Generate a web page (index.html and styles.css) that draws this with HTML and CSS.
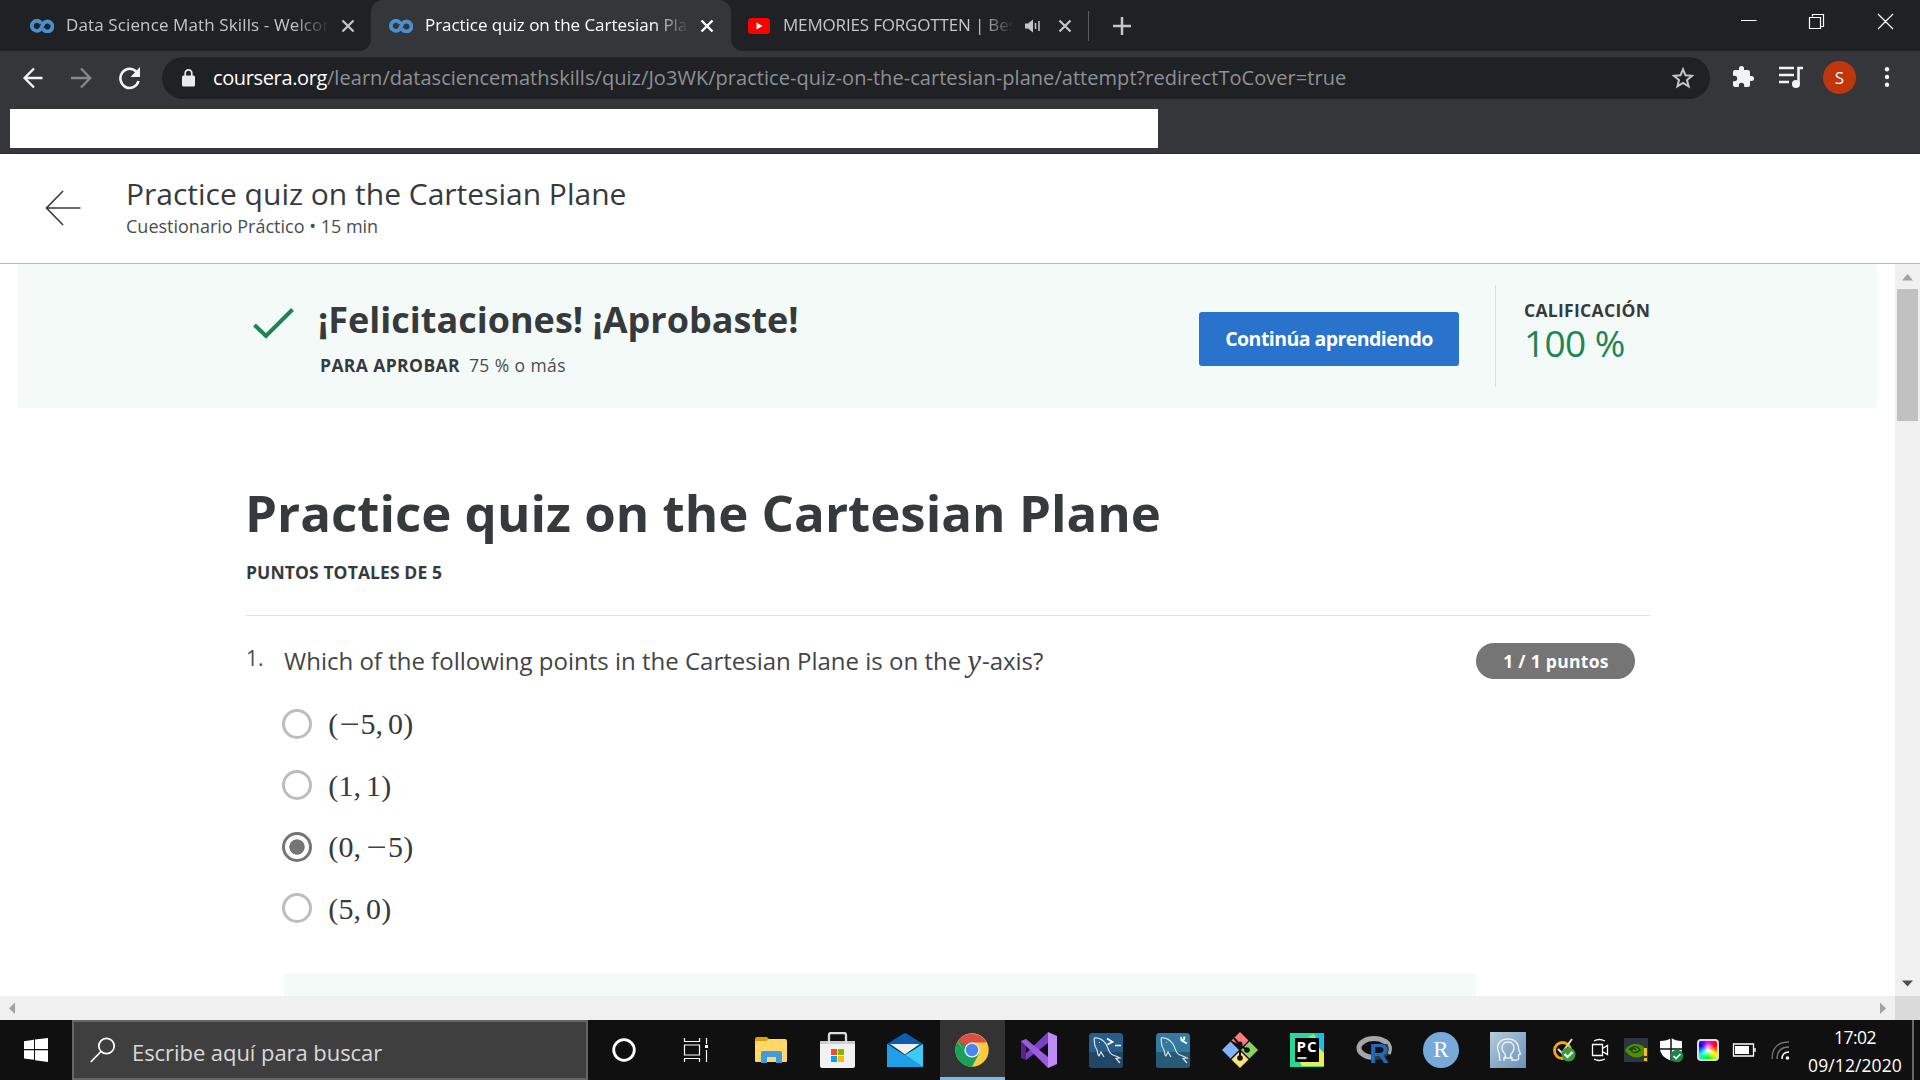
FILE: index.html
```html
<!DOCTYPE html>
<html lang="es">
<head>
<meta charset="utf-8">
<title>Practice quiz on the Cartesian Plane</title>
<link rel="stylesheet" href="styles.css">
</head>
<body>
<div class="screen">
  <div class="tabs">
    <div class="tab tab-one">
      <svg class="fav" viewBox="0 0 24 14"><path d="M11.300 4.600A5 5 0 1 0 10.800 9.800L13.600 4.300A5 5 0 1 1 12.900 9.600" fill="none" stroke="#4a8fd0" stroke-width="3.800"/></svg>
      <span class="tab-text ls-t1">Data Science Math Skills - Welcome</span>
      <svg class="close" viewBox="0 0 14 14"><path d="M1.500 1.500l11 11M12.500 1.500l-11 11" stroke="#c3c6ca" stroke-width="2.200"/></svg>
    </div>
    <div class="tab-well">
      <div class="tab tab-two">
        <svg class="fav" viewBox="0 0 24 14"><path d="M11.300 4.600A5 5 0 1 0 10.800 9.800L13.600 4.300A5 5 0 1 1 12.900 9.600" fill="none" stroke="#4a8fd0" stroke-width="3.800"/></svg>
        <span class="tab-text ls-t2">Practice quiz on the Cartesian Plane</span>
        <svg class="close" viewBox="0 0 14 14"><path d="M1.500 1.500l11 11M12.500 1.500l-11 11" stroke="#fff" stroke-width="2.400"/></svg>
      </div>
    </div>
    <div class="tab tab-three">
      <svg class="yt" viewBox="0 0 22 16"><rect width="22" height="16" rx="3.500" fill="#f00"/><path d="M8.500 4.500v7l6-3.500z" fill="#fff"/></svg>
      <span class="tab-text ls-t3">MEMORIES FORGOTTEN | Best</span>
      <svg class="speaker" viewBox="0 0 16 14"><path d="M0 4.500h3L8 .5v13L3 9.500H0z" fill="#c3c6ca"/><path d="M10.500 4v6M14 2v10" stroke="#c3c6ca" stroke-width="1.500"/></svg>
      <svg class="close" viewBox="0 0 14 14"><path d="M1.500 1.500l11 11M12.500 1.500l-11 11" stroke="#c3c6ca" stroke-width="2.200"/></svg>
    </div>
    <div class="strip">
      <div class="tab-sep"></div>
      <svg class="plus" viewBox="0 0 18 18"><path d="M9 0v18M0 9h18" stroke="#c3c6ca" stroke-width="2.500"/></svg>
      <svg class="winbtns" viewBox="0 0 153 18"><g fill="none" stroke="#fff" stroke-width="1.200"><path d="M0 8.500h15.500M71.500 4.500V2.500h11v12h-2.500M68.500 5.500h11v11h-11zM137 2l15 15M152 2l-15 15"/></g></svg>
    </div>
  </div>
  <div class="toolbar">
    <svg class="nav" viewBox="0 0 120 24"><g fill="none" stroke-width="2.400"><path d="M20.500 12H3M12 2.500L2.600 12l9.400 9.500" stroke="#f1f3f4"/><path d="M49 12h18.500M59 2.500L68.200 12 59 21.500" stroke="#85878a"/><path d="M114.500 6A9.200 9.600 0 1 0 116.500 15" stroke="#f1f3f4" stroke-width="2.600"/></g><path d="M118 1v10h-9.500z" fill="#f1f3f4"/></svg>
    <div class="omnibox">
      <svg class="lock" viewBox="0 0 13 18"><rect y="6.500" width="13" height="11" rx="1.500" fill="#e8eaed"/><path d="M3.200 7V4.200a3.300 3.300 0 0 1 6.600 0V7" fill="none" stroke="#e8eaed" stroke-width="1.700"/></svg>
      <span class="url"><span class="host">coursera.org</span><span class="path">/learn/datasciencemathskills/quiz/Jo3WK/practice-quiz-on-the-cartesian-plane/attempt?redirectToCover=true</span></span>
      <svg class="star" viewBox="0 0 22 22"><path d="M11 2.300l2.500 6 6.500.5-5 4.200 1.600 6.400L11 16l-5.600 3.400L7 13 2 8.800l6.500-.5z" fill="none" stroke="#c3c6ca" stroke-width="2"/></svg>
    </div>
    <svg class="puzzle" viewBox="0 0 24 24"><path d="M20.500 11H19V7c0-1.100-.9-2-2-2h-4V3.500a2.500 2.500 0 0 0-5 0V5H4c-1.100 0-2 .9-2 2v3.800h1.500a2.700 2.700 0 0 1 0 5.400H2V20c0 1.100.9 2 2 2h3.800v-1.500a2.700 2.700 0 0 1 5.400 0V22H17c1.100 0 2-.9 2-2v-4h1.500a2.500 2.500 0 0 0 0-5z" fill="#f1f3f4"/></svg>
    <svg class="queue" viewBox="0 0 24 23"><path d="M0 2h15M0 9h15M0 16h10" stroke="#f1f3f4" stroke-width="2.500"/><path d="M19.500 18V2H24" fill="none" stroke="#f1f3f4" stroke-width="2.600"/><circle cx="17" cy="18" r="4" fill="#f1f3f4"/></svg>
    <span class="avatar">S</span>
    <svg class="dots" viewBox="0 0 6 20"><g fill="#f1f3f4"><circle cx="3" cy="2.300" r="2.200"/><circle cx="3" cy="10" r="2.200"/><circle cx="3" cy="17.700" r="2.200"/></g></svg>
  </div>
  <div class="bookmarks"><div class="blank"></div></div>

  <header class="head">
    <svg class="back" viewBox="0 0 36 36"><path d="M35.500 18H1.500M18 1L1.500 18 18 35" fill="none" stroke="#373a3c" stroke-width="1.600"/></svg>
    <div>
      <div class="head-title">Practice quiz on the Cartesian Plane</div>
      <div class="head-sub">Cuestionario Práctico • 15 min</div>
    </div>
  </header>

  <div class="view">
    <main class="page">
      <section class="banner">
        <svg class="check" viewBox="0 0 41 31"><path d="M1.500 17L13 28 39.500 1.500" fill="none" stroke="#1d8553" stroke-width="4"/></svg>
        <div class="congrats">
          <div class="big">¡Felicitaciones! ¡Aprobaste!</div>
          <div class="pass"><b>PARA APROBAR</b><span class="pct">75 % o más</span></div>
        </div>
        <div class="button">Continúa aprendiendo</div>
        <div class="grade">
          <div class="grade-label">CALIFICACIÓN</div>
          <div class="grade-value">100 %</div>
        </div>
      </section>
      <section class="quiz">
        <h1>Practice quiz on the Cartesian Plane</h1>
        <div class="total">PUNTOS TOTALES DE 5</div>
        <div class="question">
          <span class="num">1.</span>
          <div class="prompt"><span>Which of the following points in the Cartesian Plane is on the</span><i class="var">y</i><span>-axis?</span></div>
          <span class="pill">1 / 1 puntos</span>
        </div>
        <div class="options">
          <div class="option"><span class="radio"></span><span class="math"><span class="par">(</span><span class="minus">−</span>5<span class="comma">,</span>0<span class="par">)</span></span></div>
          <div class="option"><span class="radio"></span><span class="math"><span class="par">(</span>1<span class="comma">,</span>1<span class="par">)</span></span></div>
          <div class="option"><span class="radio on"></span><span class="math"><span class="par">(</span>0<span class="comma">,</span><span class="minus">−</span>5<span class="par">)</span></span></div>
          <div class="option"><span class="radio"></span><span class="math"><span class="par">(</span>5<span class="comma">,</span>0<span class="par">)</span></span></div>
        </div>
        <div class="feedback"></div>
      </section>
    </main>
    <div class="vbar">
      <svg class="arrow" viewBox="0 0 25 25"><path d="M7 16.500L12.500 10l5.500 6.500z" fill="#a3a3a3"/></svg>
      <div class="thumb"></div>
      <svg class="arrow" viewBox="0 0 25 25"><path d="M7 9.500L12.500 15.500 18 9.500z" fill="#505050"/></svg>
    </div>
  </div>
  <div class="hbar">
    <svg class="harrow" viewBox="0 0 24 24"><path d="M15 6.500L9 12.500l6 5.500z" fill="#a3a3a3"/></svg>
    <svg class="harrow" viewBox="0 0 24 24"><path d="M9 6.500l6 6-6 5.500z" fill="#a3a3a3"/></svg>
    <div class="corner"></div>
  </div>

  <footer class="taskbar">
    <div class="start"><svg width="24" height="24" viewBox="0 0 24 24"><path d="M0 3.200L10 1.700V11H0zM11 1.500L24 0v11H11zM0 12.300h10v9.500L0 20.500zM11 12.300h13V24l-13-1.700z" fill="#fff"/></svg></div>
    <div class="search">
      <svg width="26" height="26" viewBox="0 0 26 26"><circle cx="16.500" cy="9" r="7.700" fill="none" stroke="#fff" stroke-width="1.700"/><path d="M11 14.500L.8 25" stroke="#fff" stroke-width="1.700"/></svg>
      <span class="hint">Escribe aquí para buscar</span>
    </div>
    <div class="slot wide"><svg width="26" height="26" viewBox="0 0 26 26"><circle cx="13" cy="13" r="10.300" fill="none" stroke="#fff" stroke-width="2.800"/></svg></div>
    <div class="slot wide"><svg width="26" height="24" viewBox="0 0 26 24"><path d="M1.500 0v3.500h15V0M1.500 24v-3.500h15V24M1.500 7h15v10h-15zM23.500 0v6M23.500 12v12" fill="none" stroke="#fff" stroke-width="1.200"/><path d="M22 7h3v3h-3z" fill="#fff"/></svg></div>
    <div class="apps">
      <div class="slot"><svg width="34" height="28" viewBox="0 0 34 28"><path d="M1 3a2 2 0 0 1 2-2h10l3 3h-3v5H1z" fill="#e19d0b"/><path d="M1 5h11l3-2h16a2 2 0 0 1 2 2v20a1 1 0 0 1-1 1H2a1 1 0 0 1-1-1z" fill="#ffd766"/><path d="M7 27V17a2 2 0 0 1 2-2h17a2 2 0 0 1 2 2v10h-6v-6h-9v6z" fill="#3f9ae0"/></svg></div>
      <div class="slot"><svg width="36" height="36" viewBox="0 0 36 36"><path d="M0 9h35v25a2 2 0 0 1-2 2H2a2 2 0 0 1-2-2z" fill="#f1f1f1"/><path d="M0 9h35v3H0z" fill="#ccc"/><path d="M9 12V3a2 2 0 0 1 2-2h13a2 2 0 0 1 2 2v9" fill="none" stroke="#ddd" stroke-width="2.300"/><path d="M11 17h6v6h-6z" fill="#f25022"/><path d="M18 17h6v6h-6z" fill="#7fba00"/><path d="M11 24h6v6h-6z" fill="#00a4ef"/><path d="M18 24h6v6h-6z" fill="#ffb900"/></svg></div>
      <div class="slot"><svg width="36" height="34" viewBox="0 0 36 34"><path d="M0 11L15.500 1.300a4 4 0 0 1 5 0L36 11 18 20z" fill="#0a5eb0"/><path d="M0 11l18 12L36 11v23H0z" fill="#1d9be8"/><path d="M3.500 11h29L18 21.500z" fill="#f0f0f2"/><path d="M18 22L36 11v23z" fill="#3dcbf5"/><path d="M0 34l2-1 16-11 18 12z" fill="#158ada"/><path d="M0 11l18 11 18 12H0z" fill="#1f9fe8"/></svg></div>
      <div class="slot active"><svg width="34" height="34" viewBox="0 0 34 34"><circle cx="17" cy="17" r="16.700" fill="#fccb42"/><path d="M2.500 8.700A16.700 16.700 0 0 0 17 33.700L24 20.500 17 17 10 19z" fill="#18a05b"/><path d="M2.500 8.700A16.700 16.700 0 0 1 31.500 9.500H17L10 15z" fill="#db4f43"/><path d="M3 8.200L9.500 19 12 13z" fill="#18a05b"/><circle cx="17" cy="17" r="7.600" fill="#f1f1f1"/><circle cx="17" cy="17" r="6.200" fill="#4a86ee"/></svg></div>
      <div class="slot"><svg width="36" height="36" viewBox="0 0 36 36"><path d="M5 22L0 26 27 0v11L5 28z" fill="#7d3fc8"/><path d="M0 9l5-2v21l-5-2z" fill="#54238e"/><path d="M0 9l5-2 22 18v11z" fill="#9b5be0"/><path d="M27 0l9 4v28l-9 4z" fill="#bd8cf4"/></svg></div>
      <div class="slot"><svg width="34" height="35" viewBox="0 0 34 35"><rect width="34" height="35" rx="3.500" fill="#285d8b"/><path d="M0 19h34v12a4 4 0 0 1-4 4H4a4 4 0 0 1-4-4z" fill="#204765"/><path d="M5 5c5-1 9 2 12 6 3 5 2 9 7 11 3 1 5 2 7 3l-4 .5 4 4.500M5 5c1 4-1 7 3 12 1 2 0 5 2 6l2-4 3 5M10 9.500h.8" fill="none" stroke="#dbe6ef" stroke-width="1.200"/><path d="M18 5.500l5.500 3.500-5 2.500M26 12.500h6" fill="none" stroke="#fff" stroke-width="1.700"/></svg></div>
      <div class="slot"><svg width="34" height="35" viewBox="0 0 34 35"><rect width="34" height="35" rx="3.500" fill="#34799f"/><path d="M0 19h34v12a4 4 0 0 1-4 4H4a4 4 0 0 1-4-4z" fill="#265a77"/><path d="M5 5c5-1 9 2 12 6 3 5 2 9 7 11 3 1 5 2 7 3l-4 .5 4 4.500M5 5c1 4-1 7 3 12 1 2 0 5 2 6l2-4 3 5M10 9.500h.8" fill="none" stroke="#d5e6ef" stroke-width="1.200"/><path d="M25 4l.5 3.500 5.500 3M28.500 3.500l-.5 3-3 1" fill="none" stroke="#fff" stroke-width="1.800"/></svg></div>
      <div class="slot"><svg width="36" height="36" viewBox="0 0 36 36"><path d="M18 0l8.500 8.500-6 6L9.500 8.500z" fill="#ff7b80"/><path d="M8.500 9.500L17 18l-8.500 8.500L0 18z" fill="#82b1ff"/><path d="M27.500 9.500L36 18l-8.500 8.500L19 18z" fill="#8bd35f"/><path d="M18 19l8.500 8.500L18 36l-8.500-8.500z" fill="#ffe27d"/><path d="M12 6l6 7v14M18 13l7 5" stroke="#111" stroke-width="2" fill="none"/><circle cx="18" cy="12" r="2.500" fill="#111"/><circle cx="25" cy="18" r="2.800" fill="#111"/><circle cx="18" cy="26" r="2.800" fill="#111"/></svg></div>
      <div class="slot"><svg width="34" height="34" viewBox="0 0 34 34"><path d="M0 0h34v34H0z" fill="#27d79b"/><path d="M24 0h10v20l-8-10z" fill="#17c0e6"/><path d="M26 12l8 8v13H12l-2-4z" fill="#e9f04c"/><path d="M18 4l6-3 3 6z" fill="#a4e84a"/><path d="M5 5h24v24H5z" fill="#000"/><path d="M7.500 24h9v2.200h-9z" fill="#ccc"/><text x="6.500" y="18.500" class="pc" textLength="20">PC</text></svg></div>
      <div class="slot"><svg class="spill" width="36" height="28" viewBox="0 0 36 28"><ellipse cx="18" cy="12" rx="15" ry="9.500" fill="none" stroke="#a5a6aa" stroke-width="5"/><path d="M15 8h19v20H15z" fill="#111" opacity=".75"/><path d="M29 4c5 3 7 9 4 14" fill="none" stroke="#a5a6aa" stroke-width="3"/><text x="13.500" y="27" class="rproj" textLength="21">R</text></svg></div>
      <div class="slot"><svg width="36" height="36" viewBox="0 0 36 36"><circle cx="18" cy="18" r="18" fill="#75aadb"/><text x="18" y="25" class="rstudio">R</text></svg></div>
      <div class="slot"><svg width="36" height="36" viewBox="0 0 36 36"><defs><linearGradient id="h" x1="0" y1="0" x2="1" y2="1"><stop offset="0" stop-color="#b4ccdc"/><stop offset="1" stop-color="#6a8fb8"/></linearGradient></defs><path d="M0 0h36v36H0z" fill="url(#h)"/><path d="M10 29l-1-8C5 13 10 7 18 7c7 0 11 5 10.500 10l2 5-2 1v4c-1 2-4 1-6 1M14 29v-3c2-1 2-2 1-4-6-6-2-12 3-12s9 6 3 12c-1 2-1 3 1 4v3M15 26h7" fill="none" stroke="#e7eff6" stroke-width="1.500"/></svg></div>
    </div>
    <div class="tray">
      <svg viewBox="0 0 24 24"><circle cx="10.500" cy="12.500" r="8" fill="none" stroke="#f9a51c" stroke-width="2.800"/><path d="M6 11l4 4L20 1" fill="none" stroke="#ddd" stroke-width="2"/><circle cx="16.500" cy="16.500" r="7" fill="#3a9a3e"/><path d="M12.500 16l3 3 5-5" fill="none" stroke="#fff" stroke-width="2.200"/></svg>
      <svg viewBox="0 0 24 24"><path d="M4.500 6.500h10v11h-10zM14.500 10.500l5-3v9l-5-3M6 3q5-3 11 0M6 21q5 3 11 0" fill="none" stroke="#fff" stroke-width="1.300"/></svg>
      <svg viewBox="0 0 24 24"><path d="M0 0h24v24H0z" fill="#2e3642"/><path d="M1 12c5-8 14-7 19-3v8c-7 5-15 2-19-5z" fill="#4d8d08"/><path d="M5 12c4-5 9-4 11 0-4 4-8 3-9 0 2-2 4-2 5 0" fill="none" stroke="#24420c" stroke-width="1.400"/><path d="M20 10h3v8h-3zM20 20h3v3h-3z" fill="#f0c419"/></svg>
      <svg viewBox="0 0 24 24"><path d="M0 3q7 0 11.500-3Q15 3 22 3v8q0 8-11 12Q0 18 0 11z" fill="#fff"/><path d="M11 0v23M0 11h22" stroke="#111" stroke-width="1.500"/><circle cx="17" cy="18" r="6.300" fill="#138a4b"/><path d="M13.500 18l2.500 2.500 4.500-4.500" fill="none" stroke="#fff" stroke-width="1.700"/></svg>
      <div class="hue"></div>
      <svg viewBox="0 0 24 24"><path d="M1.500 6h20v12h-20zM23 10v4" fill="none" stroke="#fff" stroke-width="1.300"/><path d="M3 8h14v8H3z" fill="#fff"/></svg>
      <svg viewBox="0 0 24 24"><path d="M4 21Q4 4 21 4" fill="none" stroke="#777" stroke-width="1.300"/><path d="M9 21Q9 9 21 9" fill="none" stroke="#777" stroke-width="1.300"/><path d="M14 21q0-7 7-7" fill="none" stroke="#fff" stroke-width="1.500"/><circle cx="19.500" cy="20" r="1.800" fill="#fff"/></svg>
    </div>
    <div class="clock"><div class="time">17:02</div><div class="date">09/12/2020</div></div>
    <div class="peek"></div>
  </footer>
</div>
</body>
</html>
```
FILE: styles.css
```css
* { box-sizing: border-box; }
body { margin: 0; font-family: "Open Sans", "Noto Sans", sans-serif; color: #373a3c; background: #fff; overflow: hidden; }
svg { display: block; flex: none; }
.screen { width: 1920px; height: 1080px; display: flex; flex-direction: column; overflow: hidden; }

/* browser chrome */
.tabs { height: 51px; flex: none; background: #35363a; display: flex; align-items: center; color: #c3c6ca; font-size: 17px; }
.tab { height: 51px; display: flex; align-items: center; background: #202124; flex: none; }
.tab-one { width: 371px; padding-left: 30px; border-radius: 0 0 12px 0; }
.tab-well { background: #202124; flex: none; }
.tab-two { width: 360px; padding-left: 18px; background: #35363a; color: #fff; border-radius: 12px 12px 0 0; }
.tab-three { width: 357px; padding-left: 17px; border-radius: 0 0 0 12px; }
.fav { width: 24px; height: 14px; margin-right: 12px; }
.tab-text { width: 264px; overflow: hidden; white-space: nowrap; -webkit-mask-image: linear-gradient(90deg, #000 86%, transparent 100%); mask-image: linear-gradient(90deg, #000 86%, transparent 100%); margin-bottom: 2px; }
.ls-t1 { letter-spacing: 0.12px; }
.ls-t2 { letter-spacing: -0.04px; }
.ls-t3 { letter-spacing: -0.17px; }
.close { width: 14px; height: 14px; margin-left: 11px; }
.yt { width: 22px; height: 16px; margin-right: 13px; }
.tab-three .tab-text { width: 231px; }
.speaker { width: 16px; height: 14px; margin-left: 11px; }
.tab-three .close { margin-left: 17px; }
.strip { flex: 1; height: 51px; background: #202124; display: flex; align-items: center; }
.tab-sep { width: 1px; height: 30px; background: #5a5c60; }
.plus { width: 18px; height: 18px; margin-left: 24px; }
.winbtns { width: 153px; height: 18px; margin: 0 26px 9px auto; }

.toolbar { height: 57px; flex: none; background: #35363a; display: flex; padding: 6px 0 0 22px; }
.nav { width: 120px; height: 24px; margin-top: 9px; }
.omnibox { width: 1548px; height: 42px; margin-left: 20px; border-radius: 21px; background: #202124; display: flex; align-items: center; padding: 0 16px 0 20px; flex: none; }
.lock { width: 13px; height: 18px; margin-right: 18px; }
.url { flex: 1; font-size: 20px; line-height: 26px; color: #8e9195; white-space: nowrap; }
.host { color: #fff; letter-spacing: -0.37px; }
.path { letter-spacing: 0.045px; }
.star { width: 22px; height: 22px; }
.puzzle { width: 24px; height: 24px; margin: 8px 0 0 21px; }
.queue { width: 24px; height: 23px; margin: 9px 0 0 24px; }
.avatar { width: 33px; height: 33px; border-radius: 50%; background: #bf360c; color: #fff; font-size: 17px; line-height: 33px; text-align: center; margin: 4px 0 0 20px; }
.dots { width: 6px; height: 20px; margin: 10px 0 0 28px; }
.bookmarks { height: 46px; flex: none; background: #35363a; border-bottom: 1px solid #28292c; padding: 1px 0 0 10px; }
.blank { width: 1148px; height: 39px; background: #fff; }

/* page header */
.head { height: 110px; flex: none; border-bottom: 1px solid #b5b9b7; display: flex; padding-top: 20px; }
.back { width: 36px; height: 36px; margin: 16px 45px 0 45px; }
.head-title { font-size: 30px; line-height: 40px; }
.head-sub { font-size: 18px; line-height: 24px; color: #4a4d50; }

.view { height: 732px; flex: none; display: flex; overflow: hidden; }
.page { width: 1895px; padding-left: 18px; overflow: hidden; height: 732px; }
.banner { width: 1859px; height: 144px; background: #f4faf8; display: flex; padding-left: 235px; }
.check { width: 41px; height: 31px; margin-top: 44px; }
.congrats { width: 881px; padding: 31px 0 0 24px; }
.big { font-size: 36px; font-weight: 700; line-height: 50px; }
.pass { font-size: 17.5px; line-height: 24px; margin-top: 8px; padding-left: 2px; display: flex; gap: 9px; }
.pass b { font-weight: 700; letter-spacing: 0.4px; }
.pct { letter-spacing: 0.4px; color: #4a4d50; }
.button { width: 260px; height: 54px; margin: 48px 36px 0 24px; border-radius: 3px; background: #2a73cc; color: #fff; font-size: 19.5px; font-weight: 700; letter-spacing: -0.55px; line-height: 53px; text-align: center; flex: none; white-space: nowrap; }
.grade { border-left: 1px solid #dcdfde; height: 102px; margin-top: 21px; padding: 13px 0 0 28px; }
.grade-label { font-size: 17.5px; font-weight: 700; line-height: 24px; letter-spacing: 0.3px; }
.grade-value { font-size: 37px; line-height: 40px; color: #1d8553; letter-spacing: -0.6px; margin-top: 1px; }

.quiz { width: 1404px; margin-left: 228px; padding-top: 69px; }
h1 { margin: 0 0 0 -1px; font-size: 51px; line-height: 70px; font-weight: 700; letter-spacing: 0.01px; white-space: nowrap; }
.total { font-size: 17.5px; font-weight: 700; line-height: 24px; margin-top: 13px; letter-spacing: 0.1px; }
.question { border-top: 1px solid #e1e1e1; margin-top: 31px; padding-top: 27px; display: flex; height: 78px; }
.num { width: 38px; font-size: 21px; line-height: 31px; color: #4a4d50; }
.prompt { width: 1192px; height: 36px; font-size: 24px; line-height: 36px; white-space: nowrap; display: flex; color: #424548; }
.var { font-family: "Liberation Serif", serif; font-size: 31px; margin: 0 1px 0 6px; }
.pill { width: 159px; height: 36px; border-radius: 18px; background: #757575; color: #fff; font-size: 17.5px; font-weight: 700; line-height: 36px; text-align: center; letter-spacing: 0.3px; padding-left: 1px; }
.option { height: 61.5px; display: flex; align-items: center; padding-left: 36px; }
.radio { width: 30px; height: 30px; border: 3px solid #bdbdbd; border-radius: 50%; margin-right: 16px; flex: none; }
.radio.on { border-color: #757575; background: radial-gradient(circle, #757575 7.3px, transparent 8px); }
.math { font-family: "Liberation Serif", serif; font-size: 30px; line-height: 40px; white-space: nowrap; padding-top: 1px; }
.par { display: inline-block; width: 10.5px; text-align: center; }
.minus { display: inline-block; width: 22px; text-align: center; transform: scaleX(1.2); }
.comma { display: inline-block; width: 12.5px; }
.feedback { margin: 34px 0 0 38px; width: 1192px; height: 40px; background: #f4faf8; }

.vbar { width: 25px; background: #f0f0f0; display: flex; flex-direction: column; }
.arrow { width: 25px; height: 25px; }
.thumb { width: 21px; height: 132px; margin: 0 2px auto; background: #c1c1c1; }
.hbar { height: 24px; flex: none; background: #f0f0f0; display: flex; }
.harrow { width: 24px; height: 24px; }
.harrow + .harrow { margin-left: auto; }
.corner { width: 25px; background: #dadada; }

/* desktop taskbar */
.taskbar { height: 60px; flex: none; background: #101010; display: flex; align-items: center; }
.start { width: 72px; padding-left: 24px; }
.search { width: 516px; height: 60px; border: 2px solid #666; background: #3f3f3f; color: #d9d9d9; font-size: 22px; display: flex; align-items: center; padding-left: 16px; gap: 16px; flex: none; }
.hint { letter-spacing: -0.06px; padding-top: 3px; }
.slot { width: 65px; height: 60px; display: flex; align-items: center; justify-content: center; flex: none; }
.wide { width: 72px; }
.apps { display: flex; gap: 2px; margin-left: 7px; }
.apps .slot { padding-right: 1px; }
.active { background: #333; border-bottom: 3px solid #76b9ed; padding-top: 3px; }
.spill { overflow: visible; }
.pc { font: 700 15px "Open Sans", sans-serif; fill: #fff; }
.rproj { font: 700 27px "Liberation Sans", sans-serif; fill: #2368bd; }
.rstudio { font: 23px "Liberation Serif", serif; fill: #fff; text-anchor: middle; }
.tray { display: flex; gap: 12px; margin-left: 11px; align-items: center; }
.tray svg { width: 24px; height: 24px; }
.hue { width: 22px; height: 22px; margin: 0 1px; border: 2px solid #ddd; border-radius: 4px; background: radial-gradient(circle, #fff, transparent 60%), conic-gradient(#f0f, red, #ff0, #0f0, #0ff, #00f, #f0f); }
.clock { width: 96px; margin: 1px 0 0 auto; color: #fff; font-size: 17.5px; text-align: center; line-height: 28px; }
.time { letter-spacing: -0.5px; }
.date { letter-spacing: 0.1px; }
.peek { width: 8px; height: 60px; border-left: 2px solid #666; margin-left: 9px; }
```
